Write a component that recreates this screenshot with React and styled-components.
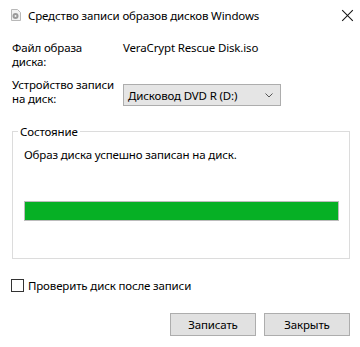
import React from "react";
import styled, { createGlobalStyle } from "styled-components";

const Global = createGlobalStyle`
  html, body { margin: 0; padding: 0; background: #fff; }
  * { box-sizing: border-box; }
`;

const Window = styled.div`
  width: 360px;
  height: 347px;
  background: #fff;
  color: #000;
  font-family: "Noto Sans", "Open Sans", sans-serif;
  font-size: 11.5px;
  letter-spacing: -0.15px;
  line-height: 13px;
  display: flex;
  flex-direction: column;
`;

const TitleBar = styled.div`
  height: 30px;
  display: flex;
  align-items: center;
  justify-content: space-between;
  padding: 0 0 0 10px;
`;

const TitleLeft = styled.div`
  display: flex;
  align-items: center;
  gap: 7px;
  white-space: nowrap;
`;

const CloseBtn = styled.button`
  flex: 0 0 auto;
  width: 14px;
  height: 14px;
  margin: 0 6px 0 0;
  padding: 0;
  border: 0;
  background: transparent;
  position: relative;
  &::before,
  &::after {
    content: "";
    position: absolute;
    left: -0.5px;
    top: 6.5px;
    width: 15px;
    height: 1px;
    background: #111;
    transform: rotate(45deg);
  }
  &::after {
    transform: rotate(-45deg);
  }
`;

const Content = styled.div`
  padding: 11px 10px 0 12px;
  display: flex;
  flex-direction: column;
`;

const FormGrid = styled.div`
  display: grid;
  grid-template-columns: 111px 158px;
  row-gap: 9px;
`;

const Label = styled.div`
  line-height: 14px;
  align-self: ${(p) => (p.$top ? "start" : "end")};
`;

const Value = styled.div`
  line-height: 14px;
  align-self: start;
`;

const Select = styled.div`
  align-self: end;
  height: 22px;
  border: 1px solid #adadad;
  background: #e5e5e5;
  display: flex;
  align-items: center;
  justify-content: space-between;
  padding: 0 7px 0 4px;
`;

const Group = styled.fieldset`
  margin: 19px 0 0 0;
  padding: 0 10px 37px 11px;
  border: 1px solid #dcdcdc;
  min-width: 0;
`;

const Legend = styled.legend`
  padding: 0 2px;
  margin-left: -6px;
`;

const Status = styled.div`
  margin-top: 10px;
`;

const Progress = styled.div`
  margin-top: 40px;
  height: 20px;
  border: 1px solid #bcbcbc;
  background: #e6e6e6;
`;

const Fill = styled.div`
  height: 100%;
  background: #06b025;
`;

const CheckRow = styled.label`
  display: flex;
  align-items: center;
  margin: 20px 0 0 -1px;
`;

const Box = styled.span`
  width: 13px;
  height: 13px;
  border: 1px solid #333;
  background: #fff;
  margin-right: 4px;
`;

const Buttons = styled.div`
  display: flex;
  justify-content: flex-end;
  gap: 8px;
  margin-top: 21px;
`;

const Button = styled.div`
  width: 86px;
  height: 23px;
  border: 1px solid #adadad;
  background: #e1e1e1;
  display: flex;
  align-items: center;
  justify-content: center;
`;

function DiscIcon() {
  return (
    <svg width="11" height="12" viewBox="0 0 11 12" style={{ flex: "none" }}>
      <path d="M1.5 0.5h6l3 3v8h-9z" fill="#f2f2f2" stroke="#b8b8b8" />
      <circle cx="5.5" cy="7" r="3" fill="#9a9a9a" />
      <circle cx="5.5" cy="7" r="1" fill="#f2f2f2" />
    </svg>
  );
}

export default function App() {
  const progress = 100;
  return (
    <>
      <Global />
      <Window>
        <TitleBar>
          <TitleLeft>
            <DiscIcon />
            <span>Средство записи образов дисков Windows</span>
          </TitleLeft>
          <CloseBtn aria-label="Закрыть" />
        </TitleBar>
        <Content>
          <FormGrid>
            <Label $top>Файл образа<br />диска:</Label>
            <Value>VeraCrypt Rescue Disk.iso</Value>
            <Label>Устройство записи<br />на диск:</Label>
            <Select>
              <span>Дисковод DVD R (D:)</span>
              <svg width="8" height="5" viewBox="0 0 8 5">
                <path d="M0.5 0.5L4 4L7.5 0.5" stroke="#555" fill="none" />
              </svg>
            </Select>
          </FormGrid>
          <Group>
            <Legend>Состояние</Legend>
            <Status>Образ диска успешно записан на диск.</Status>
            <Progress>
              <Fill style={{ width: `${progress}%` }} />
            </Progress>
          </Group>
          <CheckRow>
            <Box />
            Проверить диск после записи
          </CheckRow>
          <Buttons>
            <Button>Записать</Button>
            <Button>Закрыть</Button>
          </Buttons>
        </Content>
      </Window>
    </>
  );
}
